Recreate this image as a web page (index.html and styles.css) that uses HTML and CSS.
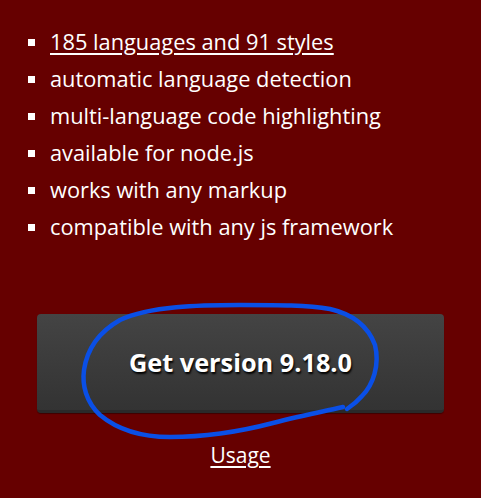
FILE: index.html
```html
<!DOCTYPE html>
<html lang="en">
<head>
    <meta charset="UTF-8">
    <title>highlight.js</title>
    <link rel="stylesheet" href="styles.css">
</head>
<body>
    <main class="page">
        <ul class="features">
            <li><a href="#" class="link">185 languages and 91 styles</a></li>
            <li>automatic language detection</li>
            <li>multi-language code highlighting</li>
            <li>available for node.js</li>
            <li>works with any markup</li>
            <li>compatible with any js framework</li>
        </ul>

        <div class="download">
            <a href="#" class="button">Get version 9.18.0</a>
            <a href="#" class="link usage">Usage</a>
        </div>
    </main>

    <!-- hand-drawn circle over the button -->
    <svg class="scribble" width="481" height="498" viewBox="0 0 481 498">
        <path d="M343 407 C330 410 300 416 273 423 C250 429 210 437 170 437 C140 437 118 430 100 415 C86 402 82 385 84 370 C87 350 97 333 120 320 C150 306 200 305 240 305 C280 305 307 305 330 309 C352 314 368 326 375 345 C380 365 373 385 362 396 C356 403 350 407 347 409"
              fill="none" stroke="#0a4fe6" stroke-width="4.5" stroke-linecap="round" stroke-linejoin="round"/>
    </svg>
</body>
</html>
```

FILE: styles.css
```css
body {
    margin: 0;
    background-color: #660000;
    color: #ffffff;
    font-family: "Open Sans", "Liberation Sans", sans-serif;
    width: 481px;
    height: 498px;
    overflow: hidden;
}

.page {
    padding-top: 23px;
}

.features {
    list-style: none;
    margin: 0;
    padding: 0 0 0 50px;
    font-size: 21.8px;
    line-height: 37px;
}

.features li {
    position: relative;
}

.features li::before {
    content: "";
    position: absolute;
    left: -22px;
    top: 16px;
    width: 7px;
    height: 7px;
    background-color: #ffffff;
}

.link {
    color: #ffffff;
    text-decoration: underline;
    text-underline-offset: 3px;
}

.download {
    display: flex;
    flex-direction: column;
    align-items: center;
    margin-top: 69px;
}

.button {
    box-sizing: border-box;
    width: 407px;
    height: 99px;
    display: flex;
    align-items: center;
    justify-content: center;
    background: linear-gradient(#444444, #333333);
    border-radius: 4px;
    border-bottom: 3px solid #2a2a2a;
    box-shadow: 0 1px 1px rgba(0, 0, 0, 0.4);
    color: #ffffff;
    font-size: 25.3px;
    font-weight: bold;
    text-decoration: none;
    text-shadow: 1px 2px 2px #000000;
}

.usage {
    margin-top: 28px;
    font-size: 21px;
}

.scribble {
    position: absolute;
    top: 0;
    left: 0;
    pointer-events: none;
}
```
